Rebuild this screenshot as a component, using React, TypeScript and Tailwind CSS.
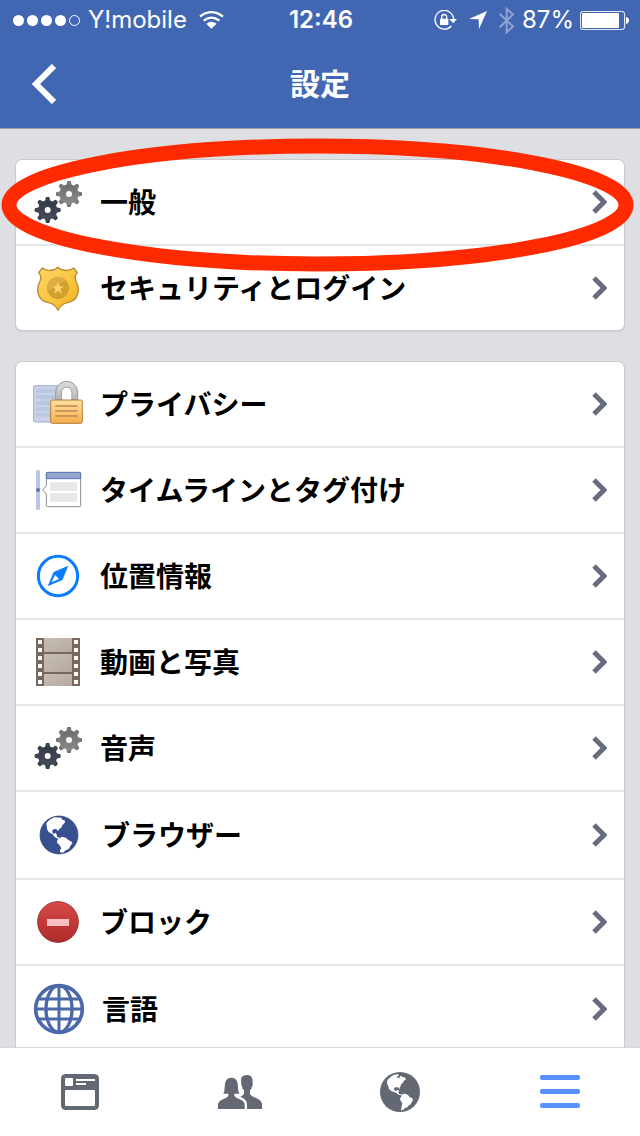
import React from "react";

type IconProps = { className?: string };

type SettingsItem = {
  id: string;
  label: string;
  icon: React.ReactNode;
  marked?: boolean;
};

const TEETH = [0, 45, 90, 135, 180, 225, 270, 315];
const HOLES = [9, 33, 57, 81, 105, 129];

function Gear({ x, y, fill }: { x: number; y: number; fill: string }) {
  return (
    <g transform={`translate(${x} ${y})`} fill={fill}>
      {TEETH.map((angle) => (
        <path
          key={angle}
          d="M-9 -24 L-6 -35 Q-6 -39 -3 -39 H3 Q6 -39 6 -35 L9 -24 Z"
          transform={`rotate(${angle})`}
        />
      ))}
      <circle r="29" />
      <circle r="9" fill="#fff" />
    </g>
  );
}

function GearsIcon() {
  return (
    <svg viewBox="0 0 150 150" className="size-[50px]" aria-hidden="true">
      <defs>
        <linearGradient id="gearLight" x1="0" y1="0" x2="0" y2="1">
          <stop offset="0" stopColor="#6c6c6c" />
          <stop offset="1" stopColor="#8a8a8a" />
        </linearGradient>
        <linearGradient id="gearDark" x1="0" y1="0" x2="0" y2="1">
          <stop offset="0" stopColor="#333a47" />
          <stop offset="1" stopColor="#454d5b" />
        </linearGradient>
      </defs>
      <Gear x={108} y={51} fill="url(#gearLight)" />
      <Gear x={44} y={99} fill="url(#gearDark)" />
    </svg>
  );
}

function BadgeIcon() {
  return (
    <svg viewBox="0 0 150 150" className="size-[50px]" aria-hidden="true">
      <defs>
        <linearGradient id="badgeFill" x1="0" y1="0" x2="1" y2="1">
          <stop offset="0" stopColor="#fbd566" />
          <stop offset="0.5" stopColor="#f8c845" />
          <stop offset="1" stopColor="#efae20" />
        </linearGradient>
      </defs>
      <path
        d="M75 13 Q68 20 60 21 Q42 25 28 15 L17 29 Q27 40 21 54 Q14 68 14 83 Q16 106 34 115 Q48 119 58 123 Q70 129 75 142 Q80 129 92 123 Q102 119 116 115 Q134 106 136 83 Q136 68 129 54 Q123 40 133 29 L122 15 Q108 25 90 21 Q82 20 75 13 Z"
        fill="url(#badgeFill)"
        stroke="#b98a2c"
        strokeWidth="4"
        strokeLinejoin="round"
      />
      <circle cx="75" cy="75" r="33" fill="#d19f2b" />
      <path d="M44 86 A33 33 0 0 1 98 51 Z" fill="#dcae45" />
      <path
        d="M75 56 L80 69 L94 70 L83 78 L87 92 L75 84 L63 92 L67 78 L56 70 L70 69 Z"
        fill="#fdd56b"
        stroke="#e9b23d"
        strokeWidth="2"
      />
    </svg>
  );
}

function PrivacyIcon() {
  return (
    <svg viewBox="0 0 150 150" className="size-[50px]" aria-hidden="true">
      <defs>
        <linearGradient id="lockBody" x1="0" y1="0" x2="0" y2="1">
          <stop offset="0" stopColor="#fde0a0" />
          <stop offset="0.5" stopColor="#fbc878" />
          <stop offset="1" stopColor="#f3ac4c" />
        </linearGradient>
        <linearGradient id="lockShackle" x1="0" y1="0" x2="0" y2="1">
          <stop offset="0" stopColor="#dedede" />
          <stop offset="1" stopColor="#b5b5b5" />
        </linearGradient>
      </defs>
      <rect x="1" y="20" width="90" height="109" rx="6" fill="#c9d2e8" stroke="#9dabd3" strokeWidth="3" />
      <path d="M9 36 H75 M9 54 H75 M9 72 H52 M9 90 H52 M9 108 H52" stroke="#b9c6e1" strokeWidth="11" />
      <path d="M68 62 V40 A33 33 0 0 1 134 40 V62 H116 V40 A15 15 0 0 0 86 40 V62 Z" fill="url(#lockShackle)" stroke="#989898" strokeWidth="3" />
      <path d="M87 62 V40 A14 14 0 0 1 115 40 V62 Z" fill="#fff" />
      <rect x="53" y="63" width="95" height="70" rx="5" fill="url(#lockBody)" stroke="#b57c3a" strokeWidth="3" />
      <path d="M67 81 H134 M67 96 H134 M67 111 H134" stroke="#bd8850" strokeWidth="4" />
    </svg>
  );
}

function TimelineIcon() {
  return (
    <svg viewBox="0 0 150 150" className="size-[50px]" aria-hidden="true">
      <rect x="9" y="15" width="12" height="120" rx="5" fill="#bac5df" />
      <circle cx="15" cy="75" r="6" fill="#5873ae" />
      <path
        d="M43 23 H140 Q143 23 143 26 V121 Q143 125 139 125 H44 Q40 125 40 121 V87 L29 75 L40 63 V26 Q40 23 43 23 Z"
        fill="#fff"
        stroke="#8e9094"
        strokeWidth="3"
      />
      <rect x="40" y="22" width="103" height="19" rx="2" fill="#95a5d0" stroke="#5873ae" strokeWidth="3" />
      <rect x="51" y="51" width="81" height="27" fill="#e7e7e7" />
      <rect x="51" y="84" width="81" height="27" fill="#e7e7e7" />
    </svg>
  );
}

function CompassIcon() {
  return (
    <svg viewBox="0 0 150 150" className="size-[50px]" aria-hidden="true">
      <circle cx="75" cy="75" r="59" fill="none" stroke="#0a7cff" strokeWidth="9" />
      <path d="M106 44 L62 63 L44 106 L88 87 Z" fill="#0a7cff" />
      <path d="M66 72 L78 84 L56 94 Z" fill="#fff" />
    </svg>
  );
}

function FilmIcon() {
  return (
    <svg viewBox="0 0 150 150" className="size-[50px]" aria-hidden="true">
      <defs>
        <linearGradient id="filmFill" x1="0" y1="0" x2="1" y2="1">
          <stop offset="0" stopColor="#c6bdb3" />
          <stop offset="1" stopColor="#b5aaa0" />
        </linearGradient>
      </defs>
      <rect x="9" y="3" width="132" height="144" fill="#77675f" />
      <rect x="33" y="3" width="84" height="42" fill="url(#filmFill)" />
      <rect x="33" y="51" width="84" height="54" rx="2" fill="url(#filmFill)" />
      <rect x="33" y="111" width="84" height="36" fill="url(#filmFill)" />
      {HOLES.map((y) => (
        <g key={y} fill="#fff">
          <rect x="15" y={y} width="12" height="12" rx="1" />
          <rect x="123" y={y} width="12" height="12" rx="1" />
        </g>
      ))}
    </svg>
  );
}

function BrowserIcon() {
  return (
    <svg viewBox="-18 -18 156 156" className="size-[52px]" aria-hidden="true">
      <circle cx="60" cy="60" r="57" fill="#37508f" stroke="#2a3d6c" strokeWidth="2" />
      <g fill="#fff">
        <path d="M22 24 Q34 10 46 7 L67 8 L70 14 L76 16 L79 21 L70 31 L67 38 L61 41 L58 48 L51 42 L43 43 L39 50 L44 57 L50 53 L53 58 L54 65 L61 68 L58 72 L47 66 L41 58 L29 51 L25 44 L23 33 Z" />
        <path d="M60 70 L70 65 L80 68 L88 75 L98 80 L100 85 L94 92 L90 101 L80 106 L72 113 L63 112 L63 105 L67 100 L62 91 L54 83 L55 75 Z" />
      </g>
    </svg>
  );
}

function BlockIcon() {
  return (
    <svg viewBox="0 0 150 150" className="size-[50px]" aria-hidden="true">
      <defs>
        <linearGradient id="blockFill" x1="0" y1="0" x2="0" y2="1">
          <stop offset="0" stopColor="#d64a47" />
          <stop offset="1" stopColor="#ae2a29" />
        </linearGradient>
      </defs>
      <circle cx="75" cy="75" r="61" fill="url(#blockFill)" stroke="#963030" strokeWidth="3" />
      <rect x="42" y="66" width="66" height="21" fill="#f9bfc1" />
    </svg>
  );
}

function LanguageIcon() {
  return (
    <svg viewBox="0 0 156 156" className="size-[52px]" fill="none" stroke="#4b69a8" aria-hidden="true">
      <circle cx="78" cy="78" r="70" strokeWidth="11" />
      <ellipse cx="78" cy="78" rx="39" ry="70" strokeWidth="10" />
      <path d="M78 8 V148 M8 78 H148 M15 48 H141 M15 108 H141" strokeWidth="9" />
    </svg>
  );
}

function ChevronIcon() {
  return (
    <svg viewBox="0 0 16 24" className="h-6 w-4 shrink-0" fill="none" aria-hidden="true">
      <path d="M3 2 L13 12 L3 22" stroke="#656d7c" strokeWidth="5" />
    </svg>
  );
}

function WifiIcon() {
  return (
    <svg viewBox="0 0 75 54" className="h-[18px] w-[25px]" aria-hidden="true">
      <g fill="none" stroke="#fff" strokeWidth="7">
        <path d="M3 17 Q37 -10 72 17" />
        <path d="M14 29 Q37 11 61 29" />
      </g>
      <path d="M22 38 Q37 27 53 38 L37 53 Z" fill="#fff" />
    </svg>
  );
}

function RotationLockIcon() {
  return (
    <svg viewBox="0 0 69 60" className="h-5 w-[23px]" fill="none" aria-hidden="true">
      <path d="M59 27 A28 28 0 1 0 52 48" stroke="#fff" strokeWidth="4" />
      <path d="M46 27 H69 L58 40 Z" fill="#fff" />
      <rect x="18" y="26" width="25" height="19" rx="2" fill="#fff" />
      <path d="M23 27 V21 A7 7 0 0 1 38 21 V27" stroke="#fff" strokeWidth="4" />
    </svg>
  );
}

function LocationIcon() {
  return (
    <svg viewBox="0 0 54 54" className="size-[18px]" aria-hidden="true">
      <path d="M54 0 L30 54 L29 25 L0 24 Z" fill="#fff" />
    </svg>
  );
}

function BluetoothIcon() {
  return (
    <svg viewBox="0 0 45 80" className="h-[27px] w-[15px]" fill="none" aria-hidden="true">
      <path d="M2 20 L42 58 L23 75 V5 L42 22 L2 60" stroke="#8fa4d3" strokeWidth="6" />
    </svg>
  );
}

function BatteryIcon() {
  return (
    <svg viewBox="0 0 147 57" className="h-[19px] w-[49px]" aria-hidden="true">
      <rect x="1" y="1" width="133" height="55" rx="9" fill="none" stroke="#fff" strokeWidth="3" />
      <rect x="6" y="6" width="111" height="45" rx="3" fill="#fff" />
      <path d="M138 18 Q147 20 147 28 Q147 37 138 39 Z" fill="#fff" />
    </svg>
  );
}

function FeedIcon({ className }: IconProps) {
  return (
    <svg viewBox="0 0 114 108" className={className} aria-hidden="true">
      <rect width="114" height="108" rx="14" fill="#626973" />
      <g fill="#fff">
        <rect x="12" y="12" width="24" height="24" rx="3" />
        <rect x="45" y="15" width="57" height="6" />
        <rect x="45" y="27" width="30" height="6" />
        <rect x="12" y="48" width="90" height="48" rx="3" />
      </g>
    </svg>
  );
}

function FriendsIcon({ className }: IconProps) {
  return (
    <svg viewBox="0 0 132 102" className={className} fill="#626973" aria-hidden="true">
      <path d="M0 102 V91 Q0 79 12 74 Q26 69 31 63 V56 H16 Q20 50 20 36 Q20 8 40 8 Q60 8 60 36 Q60 50 64 56 H49 V63 Q54 69 68 74 Q80 79 80 91 V102 Z" />
      <path d="M87 102 V88 Q87 74 73 68 L67 65 Q78 60 78 54 V46 Q72 43 72 34 Q69 31 70 26 Q68 14 71 6 Q76 0 88 0 Q106 0 104 26 Q105 31 102 34 Q101 43 96 46 V57 Q99 63 114 69 Q132 75 132 90 V102 Z" />
    </svg>
  );
}

function NotificationsIcon({ className }: IconProps) {
  return (
    <svg viewBox="0 0 120 120" className={className} aria-hidden="true">
      <circle cx="60" cy="60" r="60" fill="#626973" />
      <g fill="#fff">
        <path d="M22 24 L36 11 Q46 5 56 7 L55 12 L49 16 L57 19 L62 11 L69 16 L74 16 L78 22 L72 26 L68 33 L63 37 L62 43 L58 48 L59 54 L54 46 L47 46 L42 48 L43 55 L50 57 L53 53 L57 56 L55 62 L59 67 L65 67 L63 70 L57 69 L48 62 L35 58 L27 51 L25 43 L21 34 Z" />
        <path d="M64 69 L71 65 L79 66 L86 71 L89 76 L97 79 L99 84 L95 91 L92 97 L85 101 L82 106 L75 108 L69 114 L63 115 L64 107 L67 94 L61 85 L60 79 L64 74 Z" />
      </g>
    </svg>
  );
}

function MenuIcon({ className }: IconProps) {
  return (
    <svg viewBox="0 0 40 34" className={className} fill="#5890ff" aria-hidden="true">
      <rect y="0" width="40" height="5" rx="2" />
      <rect y="14" width="40" height="5" rx="2" />
      <rect y="28" width="40" height="5" rx="2" />
    </svg>
  );
}

const accountItems: SettingsItem[] = [
  { id: "general", label: "一般", icon: <GearsIcon />, marked: true },
  { id: "security", label: "セキュリティとログイン", icon: <BadgeIcon /> },
];

const featureItems: SettingsItem[] = [
  { id: "privacy", label: "プライバシー", icon: <PrivacyIcon /> },
  { id: "timeline", label: "タイムラインとタグ付け", icon: <TimelineIcon /> },
  { id: "location", label: "位置情報", icon: <CompassIcon /> },
  { id: "media", label: "動画と写真", icon: <FilmIcon /> },
  { id: "sound", label: "音声", icon: <GearsIcon /> },
  { id: "browser", label: "ブラウザー", icon: <BrowserIcon /> },
  { id: "block", label: "ブロック", icon: <BlockIcon /> },
  { id: "language", label: "言語", icon: <LanguageIcon /> },
];

const tabs = [
  { id: "feed", label: "ニュースフィード", icon: <FeedIcon className="h-9 w-[38px]" /> },
  { id: "friends", label: "友達", icon: <FriendsIcon className="h-[34px] w-11" /> },
  { id: "notifications", label: "お知らせ", icon: <NotificationsIcon className="size-10" /> },
  { id: "menu", label: "メニュー", icon: <MenuIcon className="h-[34px] w-10" /> },
];

function StatusBar() {
  return (
    <div className="grid grid-cols-[1fr_auto_1fr] items-center h-10 pl-[13px] pr-[11px] font-['Inter',sans-serif] text-2xl">
      <div className="flex items-center">
        <div className="flex gap-[3px] mr-2">
          {[1, 2, 3, 4].map((dot) => (
            <span key={dot} className="size-[11px] rounded-full bg-white" />
          ))}
          <span className="size-[11px] rounded-full border border-white" />
        </div>
        <span className="mr-3">Y!mobile</span>
        <WifiIcon />
      </div>
      <span className="font-semibold">12:46</span>
      <div className="flex items-center justify-end">
        <div className="flex items-center gap-3 mr-2">
          <RotationLockIcon />
          <LocationIcon />
          <BluetoothIcon />
        </div>
        <span className="mr-1.5">87%</span>
        <BatteryIcon />
      </div>
    </div>
  );
}

function SettingsList({ items }: { items: SettingsItem[] }) {
  return (
    <ul className="flex flex-col rounded-md bg-white shadow-[0_0_0_1px_#c9cbd0,0_1px_2px_#a5a7ad] divide-y-2 divide-[#e5e5e6]">
      {items.map((item) => (
        <li key={item.id} className="relative">
          <a href={`#${item.id}`} className="flex items-center gap-[17px] p-[17px]">
            {item.icon}
            <span className="flex-1 pb-0.5 text-[28px] leading-10 font-bold text-black">
              {item.label}
            </span>
            <ChevronIcon />
          </a>
          {item.marked && (
            <div className="absolute -top-[22px] -left-[15px] -right-[10px] h-[134px] z-10 pointer-events-none">
              <svg className="size-full" aria-hidden="true">
                <ellipse
                  cx="50%"
                  cy="50%"
                  className="[rx:calc(50%-8px)] [ry:calc(50%-8px)]"
                  fill="none"
                  stroke="#ff2a00"
                  strokeWidth="15"
                />
              </svg>
            </div>
          )}
        </li>
      ))}
    </ul>
  );
}

export default function App() {
  return (
    <div className="flex flex-col h-screen bg-[#dddfe3] font-['Noto_Sans_CJK_JP',sans-serif]">
      <header className="shrink-0 bg-[#4267b2] text-white border-b border-[#a0a09f]">
        <StatusBar />
        <div className="grid grid-cols-[1fr_auto_1fr] items-center h-22 px-8">
          <button type="button" aria-label="戻る" className="justify-self-start">
            <svg viewBox="0 0 24 40" className="h-10 w-6" fill="none" aria-hidden="true">
              <path d="M22 2 L4 20 L22 38" stroke="#fff" strokeWidth="6" />
            </svg>
          </button>
          <h1 className="pb-1 text-3xl font-bold">設定</h1>
        </div>
      </header>
      <main className="flex flex-1 flex-col gap-8 min-h-0 overflow-y-auto [scrollbar-width:none] px-4 pt-[31px]">
        <SettingsList items={accountItems} />
        <SettingsList items={featureItems} />
      </main>
      <nav className="grid grid-cols-4 shrink-0 bg-white border-t border-[#d5d6d9]">
        {tabs.map((tab) => (
          <button
            key={tab.id}
            type="button"
            aria-label={tab.label}
            className="flex items-center justify-center h-22"
          >
            {tab.icon}
          </button>
        ))}
      </nav>
    </div>
  );
}
